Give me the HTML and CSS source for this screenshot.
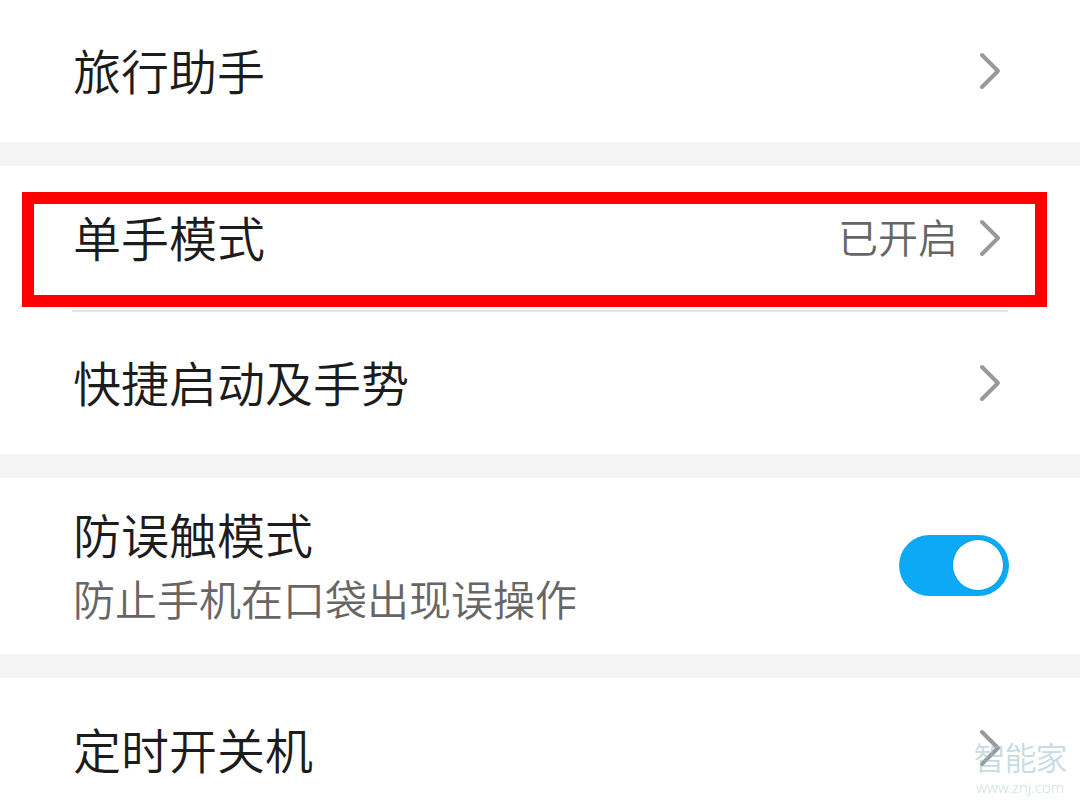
FILE: index.html
```html
<!DOCTYPE html>
<html lang="zh-CN">
<head>
<meta charset="utf-8">
<link rel="stylesheet" href="styles.css">
</head>
<body>
<div class="page">
  <section class="group">
    <div class="row r1">
      <span class="title">旅行助手</span>
      <svg class="chev" viewBox="0 0 24 40" width="24" height="40"><polyline points="4,4 20,20 4,36" /></svg>
    </div>
  </section>
  <div class="gap"></div>
  <section class="group">
    <div class="row r2">
      <span class="title">单手模式</span>
      <span class="right"><span class="value">已开启</span><svg class="chev" viewBox="0 0 24 40" width="24" height="40"><polyline points="4,4 20,20 4,36" /></svg></span>
      <div class="highlight"></div>
    </div>
    <div class="divider"></div>
    <div class="row r3">
      <span class="title">快捷启动及手势</span>
      <svg class="chev" viewBox="0 0 24 40" width="24" height="40"><polyline points="4,4 20,20 4,36" /></svg>
    </div>
  </section>
  <div class="gap"></div>
  <section class="group">
    <div class="row r4">
      <div class="texts">
        <span class="title">防误触模式</span>
        <span class="sub">防止手机在口袋出现误操作</span>
      </div>
      <div class="toggle"><div class="knob"></div></div>
    </div>
  </section>
  <div class="gap"></div>
  <section class="group">
    <div class="row r5">
      <span class="title">定时开关机</span>
      <svg class="chev" viewBox="0 0 24 40" width="24" height="40"><polyline points="4,4 20,20 4,36" /></svg>
    </div>
  </section>
  <div class="watermark">
    <span class="wm-cn">智能家</span>
    <span class="wm-url">www.znj.com</span>
  </div>
</div>
</body>
</html>
```

FILE: styles.css
```css
html, body {
  margin: 0;
  padding: 0;
  background: #ffffff;
}
.page {
  position: relative;
  width: 1080px;
  height: 805px;
  overflow: hidden;
  font-family: "Noto Sans CJK SC", "Noto Sans", sans-serif;
  font-weight: 350;
  background: #ffffff;
}
.group {
  background: #ffffff;
}
.gap {
  height: 24px;
  background: #f5f5f5;
}
.row {
  position: relative;
  display: flex;
  align-items: center;
  justify-content: space-between;
  padding: 0 78px 0 73px;
}
.r1 { height: 142px; }
.r2 { height: 144px; }
.r3 { height: 142px; }
.r4 { height: 176px; padding-right: 71px; }
.r5 { height: 150px; align-items: flex-start; padding-top: 50px; box-sizing: border-box; }
.title {
  font-size: 48px;
  line-height: 1;
  color: #1c1c1c;
  margin-top: -4px;
}
.right {
  display: flex;
  align-items: center;
  gap: 20px;
}
.value {
  font-size: 40px;
  line-height: 1;
  color: #666666;
  margin-top: -4px;
}
.chev {
  display: block;
}
.chev polyline {
  fill: none;
  stroke: #999999;
  stroke-width: 4;
  stroke-linecap: round;
  stroke-linejoin: round;
}
.divider {
  height: 2px;
  margin: 0 72px;
  background: #e3e3e3;
}
.highlight {
  position: absolute;
  left: 22px;
  top: 26px;
  width: 1025px;
  height: 115px;
  box-sizing: border-box;
  border: 12px solid #ff0000;
}
.texts {
  display: flex;
  flex-direction: column;
  gap: 20px;
}
.sub {
  font-size: 42px;
  line-height: 1;
  color: #666666;
}
.toggle {
  width: 110px;
  height: 61px;
  border-radius: 31px;
  background: #0ba9f6;
  display: flex;
  align-items: center;
  justify-content: flex-end;
  padding-right: 6px;
  box-sizing: border-box;
  margin-top: -2px;
}
.knob {
  width: 50px;
  height: 50px;
  border-radius: 50%;
  background: #ffffff;
  box-shadow: 0 0 0 1px rgba(0,0,0,0.05);
}
.watermark {
  position: absolute;
  left: 968px;
  top: 740px;
  width: 104px;
  display: flex;
  flex-direction: column;
  align-items: center;
  color: rgba(150, 190, 198, 0.55);
  line-height: 1;
}
.wm-cn {
  font-size: 32px;
  letter-spacing: -1px;
}
.wm-url {
  font-size: 15px;
  margin-top: 8px;
  font-family: "Open Sans", "Noto Sans", sans-serif;
}
```
